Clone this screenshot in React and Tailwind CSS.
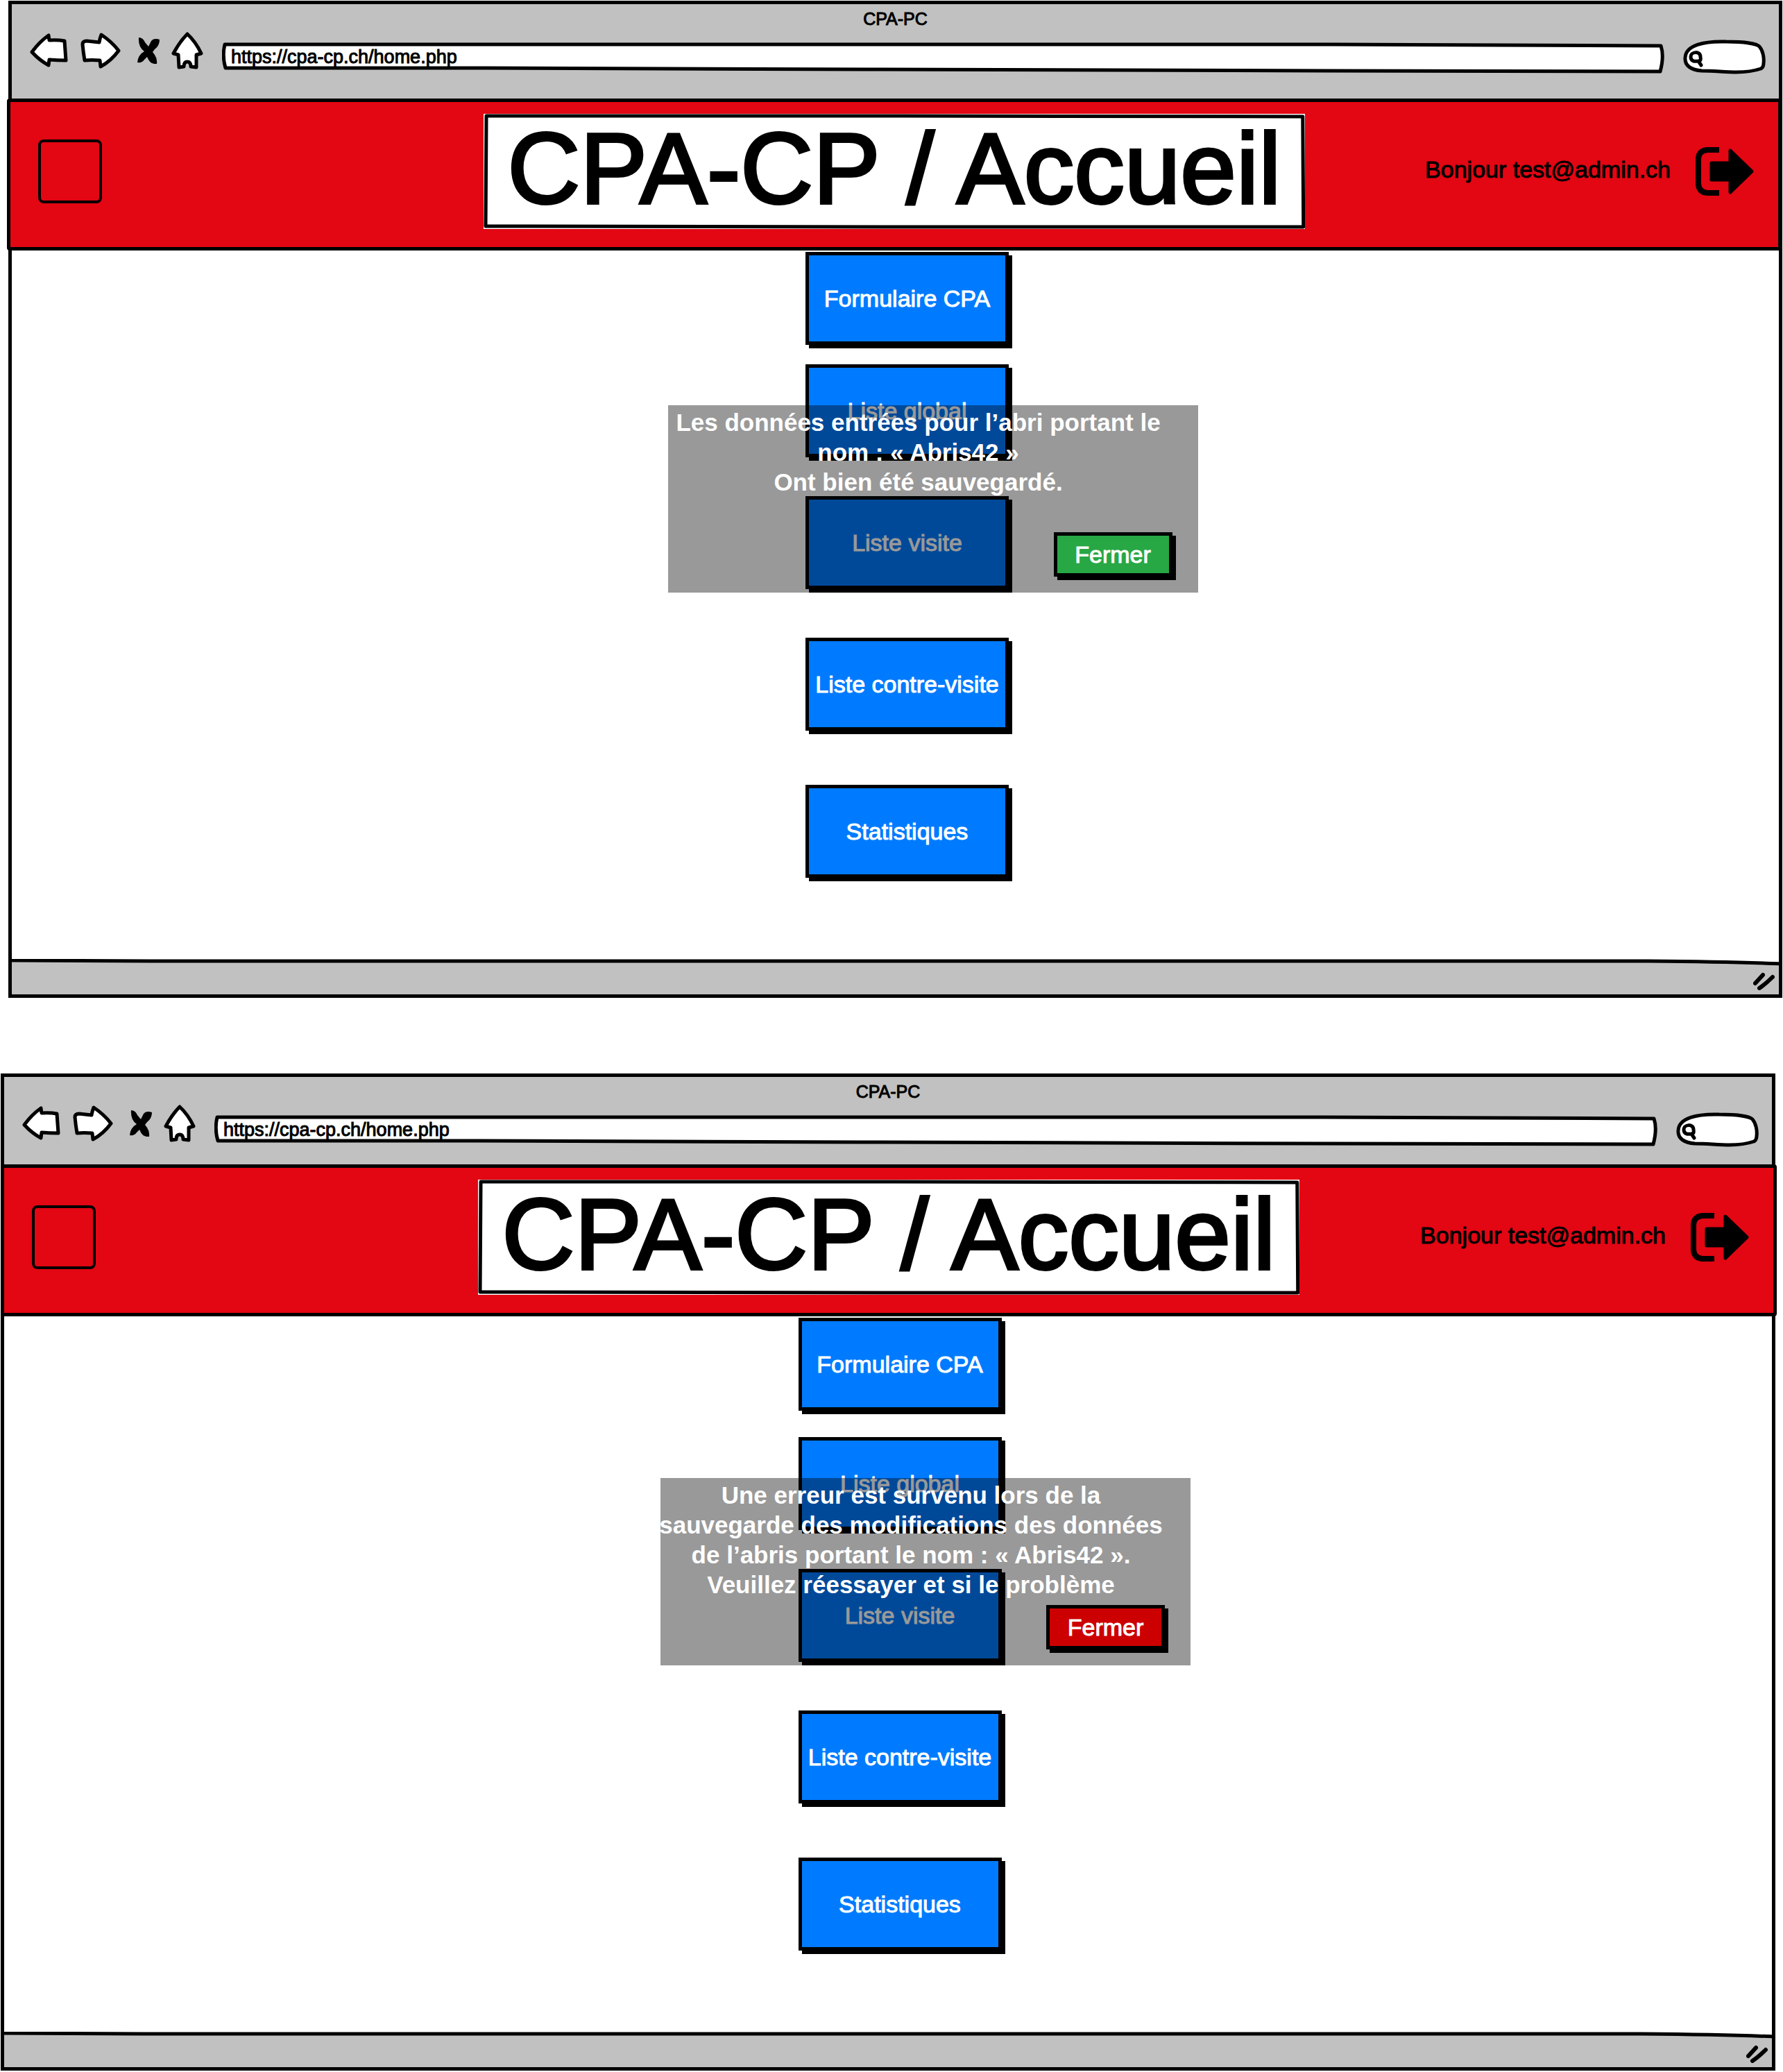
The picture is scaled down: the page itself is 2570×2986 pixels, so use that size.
import React from "react";

const iconProps = {
  fill: "white",
  stroke: "black",
  strokeWidth: 5,
  strokeLinejoin: "round",
  strokeLinecap: "round",
  "aria-hidden": true,
};

function BackIcon() {
  return (
    <svg className="h-[50px] w-[55px]" viewBox="0 0 55 50" {...iconProps}>
      <path d="M3 27Q14 12 27 3L28 10Q40 9 50 11Q51 25 52 39Q40 39 28 38L27 46Q14 39 3 27Z" />
    </svg>
  );
}

function ForwardIcon() {
  return (
    <svg className="h-[52px] w-[58px]" viewBox="0 0 58 52" {...iconProps}>
      <path d="M3 17Q3 12 9 12L27 14Q28 8 30 3Q45 13 55 26Q44 41 29 49L28 40Q16 39 6 40Q4 28 3 17Z" />
    </svg>
  );
}

function StopIcon() {
  return (
    <svg className="h-[38px] w-[32px]" viewBox="0 0 32 38" aria-hidden>
      <path d="M2 0Q8 0 11 7L16 13L20 5Q24 0 32 3Q32 12 25 17L22 21L25 25Q29 31 28 38Q20 39 16 32L14 28L10 32Q7 37 0 36Q1 25 10 20Q1 14 2 0Z" />
    </svg>
  );
}

function HomeIcon() {
  return (
    <svg className="h-[54px] w-[46px]" viewBox="0 0 46 54" {...iconProps}>
      <path d="M23 3Q12 14 3 31L10 33L11 51L18 50Q18 43 23 43Q28 43 28 50L36 51L36 33L43 31Q35 14 23 3Z" />
    </svg>
  );
}

function LogoutIcon() {
  return (
    <svg className="h-[70px] w-[84px]" viewBox="0 0 84 70" aria-hidden>
      <path d="M34 4H17Q4 5 4 18V52Q4 65 17 66H34" fill="none" stroke="black" strokeWidth="8" />
      <path
        d="M23 23H50V5L81 35L50 65V47H23Z"
        stroke="black"
        strokeWidth="5"
        strokeLinejoin="round"
      />
    </svg>
  );
}

function ResizeGrip() {
  return (
    <svg className="relative h-[26px] w-[32px]" viewBox="0 0 32 26" aria-hidden>
      <path d="M3 16L14 4M9 23Q18 17 28 7" fill="none" stroke="black" strokeWidth="6" strokeLinecap="round" />
    </svg>
  );
}

function AddressBar() {
  return (
    <div className="relative h-[46px] flex-1">
      <svg
        className="absolute inset-0 h-full w-full"
        viewBox="0 0 2078 46"
        preserveAspectRatio="none"
        aria-hidden
      >
        <path
          d="M4 3L1600 3L2073 5Q2078 20 2072 42L1590 41L930 39L380 37L5 37Q0 20 4 3Z"
          fill="white"
          stroke="black"
          strokeWidth="5"
          strokeLinejoin="round"
        />
      </svg>
      <input
        type="text"
        aria-label="Adresse"
        defaultValue="https://cpa-cp.ch/home.php"
        className="relative h-[42px] w-full bg-transparent px-[13px] text-[27px] outline-none [-webkit-text-stroke:1px_black]"
      />
    </div>
  );
}

function SearchBox() {
  return (
    <div className="relative h-[50px] w-[119px]">
      <svg className="absolute inset-0 h-full w-full" viewBox="0 0 119 50" {...iconProps}>
        <path d="M3 26C4 8 30 2 62 3C88 3 106 6 110 10C115 16 117 26 116 34Q116 40 112 42C100 46 88 47 77 47C60 47 45 45 27 45C12 44 2 38 3 26Z" />
        <path
          d="M11 25C11 17 25 16 25 25C26 30 25 31 22 31C16 32 11 31 11 25ZM22 31L26 37"
          fill="none"
        />
      </svg>
      <input
        type="text"
        aria-label="Rechercher"
        className="relative h-full w-full bg-transparent pr-3 pl-9 text-[27px] outline-none"
      />
    </div>
  );
}

function Toolbar({ padding }) {
  return (
    <div className={`bg-[#c1c1c1] pt-[5px] ${padding}`}>
      <div className="text-center text-[25px] leading-[32px] [-webkit-text-stroke:1px_black]">CPA-PC</div>
      <div className="mt-[3px] flex h-[61px] items-end gap-[27px] pr-[19px] pl-[26px]">
        <nav className="flex h-[54px] items-center gap-[18px] self-start" aria-label="Navigation">
          <button type="button" aria-label="Précédent"><BackIcon /></button>
          <button type="button" aria-label="Suivant"><ForwardIcon /></button>
          <button type="button" aria-label="Arrêter" className="ml-[6px]"><StopIcon /></button>
          <button type="button" aria-label="Accueil" className="-ml-px"><HomeIcon /></button>
        </nav>
        <AddressBar />
        <SearchBox />
      </div>
    </div>
  );
}

function Banner({ margin }) {
  return (
    <header
      className={`relative grid grid-cols-[1fr_auto_1fr] items-center rounded-[4px] border-5 border-black bg-[#e30613] pt-[17px] pb-[26px] ${margin}`}
    >
      <div className="pl-[40px]">
        <div className="size-[92px] rounded-[8px] border-4 border-black" />
      </div>
      <div className="relative bg-white px-[35px]">
        <svg
          className="absolute inset-0 h-full w-full"
          viewBox="0 0 1180 166"
          preserveAspectRatio="none"
          aria-hidden
        >
          <path
            d="M4 3L600 3L1176 4L1177 163L600 163L3 162Z"
            fill="none"
            stroke="black"
            strokeWidth="5"
            strokeLinejoin="round"
          />
        </svg>
        <h1 className="relative h-[166px] text-[145px] leading-[158px] whitespace-nowrap [-webkit-text-stroke:4px_black]">
          CPA-CP / Accueil
        </h1>
      </div>
      <div className="flex items-center justify-end gap-[36px] pr-[35px]">
        <span className="pb-[6px] text-[34px] [-webkit-text-stroke:1px_black]">Bonjour test@admin.ch</span>
        <button type="button" aria-label="Se déconnecter"><LogoutIcon /></button>
      </div>
    </header>
  );
}

function SketchButton({ className, children }) {
  return (
    <button
      type="button"
      className={`border-5 border-black text-[34px] whitespace-nowrap text-white shadow-[5px_5px_0_black] [-webkit-text-stroke:1px] ${className}`}
    >
      {children}
    </button>
  );
}

function MenuButton({ className = "", children }) {
  return (
    <SketchButton className={`h-[134px] w-[293px] bg-[#007bff] ${className}`}>{children}</SketchButton>
  );
}

function Message({ lines, closeColor }) {
  return (
    <div className="absolute inset-x-0 bottom-[528px] flex justify-center pl-[108px]">
      <div
        role="alertdialog"
        aria-label="Message"
        className="flex h-[270px] w-[764px] flex-col justify-between bg-black/40 pt-[3px] pb-[23px]"
      >
        <p className="flex w-[722px] flex-col items-center text-[35px] leading-[43px] font-bold whitespace-nowrap text-white">
          {lines.map((line) => (
            <span key={line}>{line}</span>
          ))}
        </p>
        <SketchButton className={`mr-[37px] h-[64px] w-[171px] self-end ${closeColor}`}>Fermer</SketchButton>
      </div>
    </div>
  );
}

function StatusBar() {
  return (
    <footer className="relative flex h-[51px] items-end justify-end pr-[5px] pb-[6px]">
      <svg
        className="absolute inset-0 h-full w-full"
        viewBox="0 0 2548 51"
        preserveAspectRatio="none"
        aria-hidden
      >
        <path d="M-4 2L200 3L2360 3Q2480 4 2552 7V56H-4Z" fill="#c1c1c1" stroke="black" strokeWidth="5" />
      </svg>
      <ResizeGrip />
    </footer>
  );
}

function BrowserWindow({ margin, toolbarPadding, bannerMargin, firstGap, lines, closeColor }) {
  return (
    <section className={`border-5 border-black ${margin}`}>
      <Toolbar padding={toolbarPadding} />
      <Banner margin={bannerMargin} />
      <main className="relative flex flex-col items-center pt-[2px] pb-[117px] pl-[34px]">
        <MenuButton>Formulaire CPA</MenuButton>
        <MenuButton className={firstGap}>Liste global</MenuButton>
        <MenuButton className="mt-[56px]">Liste visite</MenuButton>
        <MenuButton className="mt-[70px]">Liste contre-visite</MenuButton>
        <MenuButton className="mt-[78px]">Statistiques</MenuButton>
        <Message lines={lines} closeColor={closeColor} />
      </main>
      <StatusBar />
    </section>
  );
}

export default function App() {
  return (
    <div className="flex flex-col gap-[109px] bg-white pt-px pb-[2px] font-['Liberation_Sans',Arial,sans-serif] text-black">
      <BrowserWindow
        margin="mr-px ml-[12px]"
        toolbarPadding="pb-[35px]"
        bannerMargin="-mr-[4px] -ml-[7px]"
        firstGap="mt-[28px]"
        lines={[
          "Les données entrées pour l’abri portant le",
          "nom : « Abris42 »",
          "Ont bien été sauvegardé.",
        ]}
        closeColor="bg-[#28a745]"
      />
      <BrowserWindow
        margin="mr-[11px] ml-px"
        toolbarPadding="pb-[25px]"
        bannerMargin="-mr-[7px] -ml-[5px]"
        firstGap="mt-[38px]"
        lines={[
          "Une erreur est survenu lors de la",
          "sauvegarde des modifications des données",
          "de l’abris portant le nom : « Abris42 ».",
          "Veuillez réessayer et si le problème",
        ]}
        closeColor="bg-[#cc0000]"
      />
    </div>
  );
}
